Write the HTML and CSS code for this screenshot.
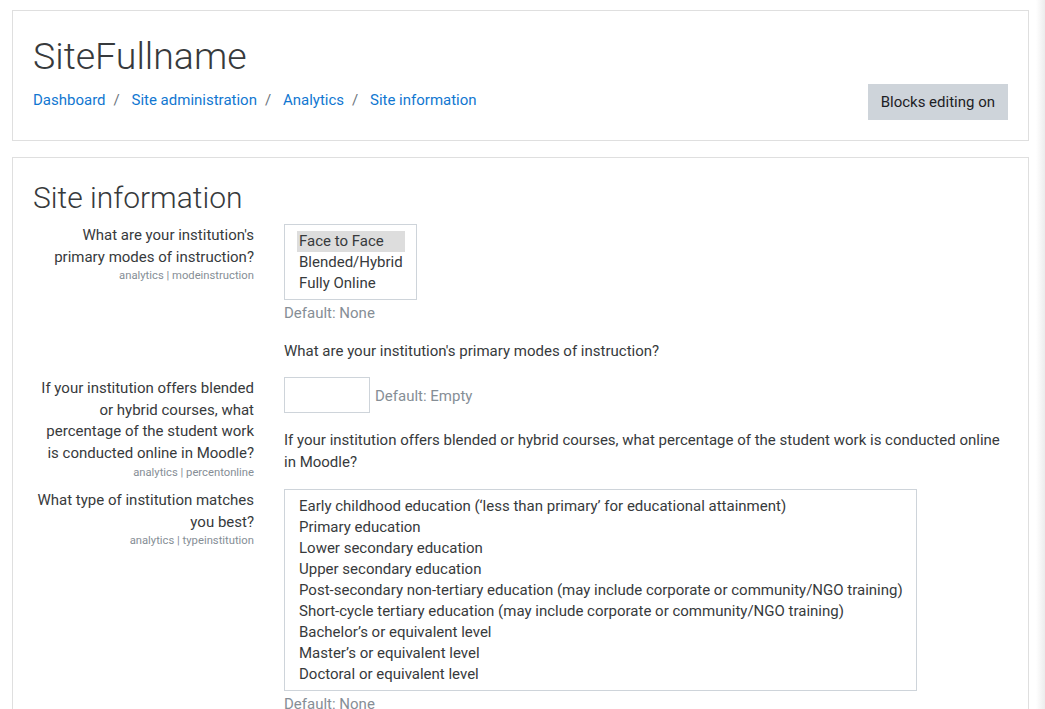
FILE: index.html
```html
<!DOCTYPE html>
<html lang="en">
<head>
    <meta charset="UTF-8">
    <title>Site information</title>
    <link rel="stylesheet" href="styles.css">
</head>
<body>

    <div class="page">

        <!-- Page header -->
        <header class="card header-card">
            <h1 class="site-name">SiteFullname</h1>
            <div class="header-bar">
                <nav class="crumbs">
                    <a href="#">Dashboard</a><span class="sep">/</span>
                    <a href="#">Site administration</a><span class="sep">/</span>
                    <a href="#">Analytics</a><span class="sep">/</span>
                    <a href="#">Site information</a>
                </nav>
                <button class="btn-edit">Blocks editing on</button>
            </div>
        </header>

        <!-- Settings form -->
        <main class="card main-card">
            <h2 class="page-title">Site information</h2>

            <div class="setting">
                <div class="setting-label">
                    <label>What are your institution's primary modes of instruction?</label>
                    <span class="setting-name">analytics | modeinstruction</span>
                </div>
                <div class="setting-field">
                    <div class="listbox">
                        <div class="opt selected">Face to Face</div>
                        <div class="opt">Blended/Hybrid</div>
                        <div class="opt">Fully Online</div>
                    </div>
                    <div class="default-info">Default: None</div>
                    <div class="setting-desc">What are your institution's primary modes of instruction?</div>
                </div>
            </div>

            <div class="setting">
                <div class="setting-label">
                    <label>If your institution offers blended or hybrid courses, what percentage of the student work is conducted online in Moodle?</label>
                    <span class="setting-name">analytics | percentonline</span>
                </div>
                <div class="setting-field">
                    <div class="input-row">
                        <input type="text" class="text-input">
                        <span class="default-info">Default: Empty</span>
                    </div>
                    <div class="setting-desc">If your institution offers blended or hybrid courses, what percentage of the student work is conducted online in Moodle?</div>
                </div>
            </div>

            <div class="setting">
                <div class="setting-label">
                    <label>What type of institution matches you best?</label>
                    <span class="setting-name">analytics | typeinstitution</span>
                </div>
                <div class="setting-field">
                    <div class="listbox">
                        <div class="opt">Early childhood education (‘less than primary’ for educational attainment)</div>
                        <div class="opt">Primary education</div>
                        <div class="opt">Lower secondary education</div>
                        <div class="opt">Upper secondary education</div>
                        <div class="opt">Post-secondary non-tertiary education (may include corporate or community/NGO training)</div>
                        <div class="opt">Short-cycle tertiary education (may include corporate or community/NGO training)</div>
                        <div class="opt">Bachelor’s or equivalent level</div>
                        <div class="opt">Master’s or equivalent level</div>
                        <div class="opt">Doctoral or equivalent level</div>
                    </div>
                    <div class="default-info">Default: None</div>
                </div>
            </div>
        </main>

    </div>

</body>
</html>
```

FILE: styles.css
```css
body {
    margin: 0;
    font-family: Roboto, "Liberation Sans", sans-serif;
    font-size: 15px;
    line-height: 22px;
    color: #373a3c;
    background: linear-gradient(to right, #fff calc(100% - 9px), #ececec);
    overflow: hidden;
}

.page {
    padding: 10px 16px 0 12px;
}

.card {
    border: 1px solid #dfdfdf;
    background: #fff;
    padding: 20px;
}

/* Header */
.header-card {
    margin-bottom: 16px;
}

.site-name {
    margin: 0 0 2px;
    font-size: 37.5px;
    font-weight: 300;
    line-height: 51px;
    color: #373a3c;
}

.header-bar {
    display: flex;
    justify-content: space-between;
    align-items: center;
}

.crumbs {
    margin-bottom: 4px;
}

.crumbs a {
    color: #1177d1;
    text-decoration: none;
}

.crumbs .sep {
    color: #6c757d;
    padding: 0 8px;
}

.btn-edit {
    background-color: #ced4da;
    border: 1px solid #ced4da;
    color: #1d2125;
    font-family: inherit;
    font-size: 15px;
    line-height: 22px;
    padding: 6px 12px;
    border-radius: 0;
    height: 36px;
    cursor: pointer;
}

/* Main */
.main-card {
    padding-top: 22px;
    min-height: 600px;
}

.page-title {
    margin: 0 0 8px;
    font-size: 30px;
    font-weight: 300;
    line-height: 36px;
}

.setting {
    display: grid;
    grid-template-columns: 221px 1fr;
    column-gap: 30px;
    margin-bottom: 8px;
}

.setting-label {
    text-align: right;
    padding-top: 1px;
}

.setting-label label {
    display: block;
    line-height: 21.7px;
    color: #373a3c;
}

.setting-name {
    display: block;
    font-size: 11.25px;
    line-height: 16px;
    color: #868e96;
}

.listbox {
    display: inline-block;
    border: 1px solid #ced4da;
    padding: 6px 11px 5px 12px;
    vertical-align: top;
}

.opt {
    padding: 0 2px;
    line-height: 21px;
    white-space: nowrap;
}

.opt.selected {
    background-color: #dddddd;
}

.default-info {
    color: #868e96;
    margin-top: 2px;
}

.setting-desc {
    margin: 16px 0 7px;
}

.input-row {
    display: flex;
    align-items: center;
}

.text-input {
    width: 86px;
    height: 36px;
    box-sizing: border-box;
    border: 1px solid #ced4da;
    margin: 0 5px 0 0;
    padding: 6px 12px;
    font: inherit;
}

.input-row .default-info {
    margin-top: 2px;
}
```
